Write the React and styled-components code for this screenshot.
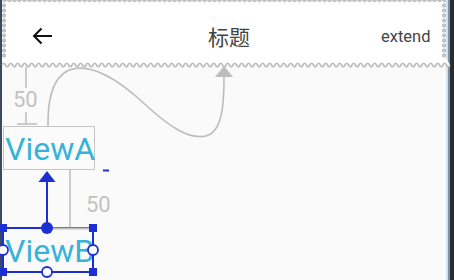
import React from "react";
import styled, { createGlobalStyle } from "styled-components";

const GlobalStyle = createGlobalStyle`
  html, body { margin: 0; padding: 0; background: #2d2d2d; }
  body { font-family: Roboto, "Noto Sans", sans-serif; }
`;

const BLUE = "#1c2fd4";
const GRAY = "#bdbdbd";

// rounded zigzag under the app bar
const buildWave = () => {
  let d = "M2 65";
  for (let x = 2; x < 446; x += 7) {
    d += ` Q${x + 1.75} 61.5 ${x + 3.5} 65 Q${x + 5.25} 68.5 ${x + 7} 65`;
  }
  return d;
};
const wave = buildWave();

const App = () => {
  return (
    <>
      <GlobalStyle />
      <Frame>
        <LeftRail />
        <Screen>
          <AppBar>
            <TopEdge />
            <BarRow>
              <SideEdge />
              <Toolbar>
                <Leading>
                  <svg width="22" height="18" viewBox="0 0 22 18">
                    <path d="M20 9H2M9.5 1.5L2 9l7.5 7.5" fill="none" stroke="#111" strokeWidth="2" />
                  </svg>
                </Leading>
                <Title>标题</Title>
                <Action>extend</Action>
              </Toolbar>
              <SideEdge />
            </BarRow>
          </AppBar>

          <Canvas>
            <Lines width="444" height="220" viewBox="2 60 444 220">
              <path d={`${wave} L446 58 L2 58 Z`} fill="#fff" stroke="none" />
              <path d={wave} fill="none" stroke={GRAY} strokeWidth="1.7" />

              {/* top margin of ViewA */}
              <line x1="26" y1="67" x2="26" y2="88" stroke={GRAY} strokeWidth="1.5" />
              <line x1="26" y1="112" x2="26" y2="124" stroke={GRAY} strokeWidth="1.5" />
              <line x1="17" y1="124" x2="37" y2="124" stroke={GRAY} strokeWidth="1.5" />

              {/* curved constraint to the title */}
              <path
                d="M48 126 C47 50 92 58 138 98 C168 126 188 140 206 136 C221 132 224 110 224 77"
                fill="none"
                stroke={GRAY}
                strokeWidth="1.6"
              />
              <polygon points="224,66 215,77 233,77" fill={GRAY} />

              {/* margin between ViewA and ViewB */}
              <line x1="70" y1="170" x2="70" y2="228" stroke={GRAY} strokeWidth="1.5" />

              {/* blue dash */}
              <line x1="103" y1="170.5" x2="109" y2="170.5" stroke={BLUE} strokeWidth="2" />
            </Lines>

            <Label style={{ left: 11, top: 29 }}>50</Label>
            <Label style={{ left: 84, top: 134 }}>50</Label>

            <ViewBox style={{ left: 1, top: 66 }}>ViewA</ViewBox>

            <Selected style={{ left: 1, top: 168 }}>
              ViewB
            </Selected>

            <Handles width="444" height="220" viewBox="2 60 444 220">
              <line x1="3" y1="228" x2="93" y2="228" stroke={BLUE} strokeWidth="2" />
              <line x1="3" y1="272" x2="93" y2="272" stroke={BLUE} strokeWidth="2" />
              <line x1="3" y1="228" x2="3" y2="272" stroke={BLUE} strokeWidth="2" />
              <line x1="93" y1="228" x2="93" y2="272" stroke={BLUE} strokeWidth="2" />
              <line x1="52" y1="228.5" x2="90" y2="228.5" stroke={GRAY} strokeWidth="2" />

              <line x1="47" y1="228" x2="47" y2="180" stroke={BLUE} strokeWidth="2" />
              <polygon points="47,171 38.5,182 55.5,182" fill={BLUE} />
              <circle cx="47" cy="228" r="6" fill={BLUE} />

              <rect x="-1" y="224" width="8" height="8" fill={BLUE} />
              <rect x="89" y="224" width="8" height="8" fill={BLUE} />
              <rect x="-1" y="268" width="8" height="8" fill={BLUE} />
              <rect x="89" y="268" width="8" height="8" fill={BLUE} />

              <circle cx="3" cy="250" r="5" fill="#fff" stroke={BLUE} strokeWidth="1.8" />
              <circle cx="93" cy="250" r="5" fill="#fff" stroke={BLUE} strokeWidth="1.8" />
              <circle cx="47" cy="272" r="5" fill="#fff" stroke={BLUE} strokeWidth="1.8" />
            </Handles>
          </Canvas>
        </Screen>
        <RightRail>
          <RailStripe color="#cfe0f0" width="2px" />
          <RailStripe color="#7c92aa" width="2px" />
          <RailStripe color="#2b2b2b" width="4px" />
        </RightRail>
      </Frame>
    </>
  );
};

export default App;

const Frame = styled.div`
  width: 454px;
  height: 280px;
  display: flex;
  overflow: hidden;
`;

const LeftRail = styled.div`
  width: 2px;
  background: #3c4a5d;
`;

const RightRail = styled.div`
  display: flex;
  width: 8px;
`;

const RailStripe = styled.div`
  width: ${({ width }) => width};
  background: ${({ color }) => color};
`;

const Screen = styled.div`
  flex: 1;
  display: flex;
  flex-direction: column;
  background: #fafafa;
`;

const AppBar = styled.div`
  background: #fff;
  display: flex;
  flex-direction: column;
`;

const TopEdge = styled.div`
  height: 3px;
  background-image: radial-gradient(circle at 50% 0, #c4c4c4 2px, transparent 2.6px);
  background-size: 5px 4px;
`;

const BarRow = styled.div`
  display: flex;
  height: 57px;
`;

const SideEdge = styled.div`
  width: 4px;
  background-image: radial-gradient(circle at 50% 50%, #c4c4c4 1.8px, transparent 2.4px);
  background-size: 4px 5px;
`;

const Toolbar = styled.div`
  flex: 1;
  display: flex;
  align-items: center;
  padding-top: 9px;
  box-sizing: border-box;
`;

const Leading = styled.div`
  width: 71px;
  display: flex;
  align-items: center;
  padding-left: 26px;
  box-sizing: border-box;
`;

const Title = styled.div`
  flex: 1;
  text-align: center;
  font-family: "Noto Sans CJK SC", "Noto Sans", sans-serif;
  font-size: 21px;
  color: #444;
`;

const Action = styled.div`
  padding: 0 12px 0 0;
  width: 61px;
  box-sizing: border-box;
  font-family: Roboto, sans-serif;
  font-size: 16.5px;
  color: #444;
  text-align: left;
`;

const Canvas = styled.div`
  position: relative;
  flex: 1;
`;

const Lines = styled.svg`
  position: absolute;
  left: 0;
  top: 0;
  overflow: visible;
`;

const Handles = styled(Lines)``;

const Label = styled.div`
  position: absolute;
  font-family: Roboto, sans-serif;
  font-size: 22px;
  line-height: 22px;
  color: #c2c2c2;
`;

const ViewBox = styled.div`
  position: absolute;
  width: 92px;
  height: 44px;
  box-sizing: border-box;
  border: 1.5px solid #c6c6c6;
  background: #fbfbfb;
  padding: 3px 0 0 1px;
  font-family: Roboto, sans-serif;
  font-size: 32px;
  line-height: 38px;
  color: #36b3d8;
  white-space: nowrap;
`;

const Selected = styled(ViewBox)`
  width: 90px;
  border-color: transparent;
  background: transparent;
`;
